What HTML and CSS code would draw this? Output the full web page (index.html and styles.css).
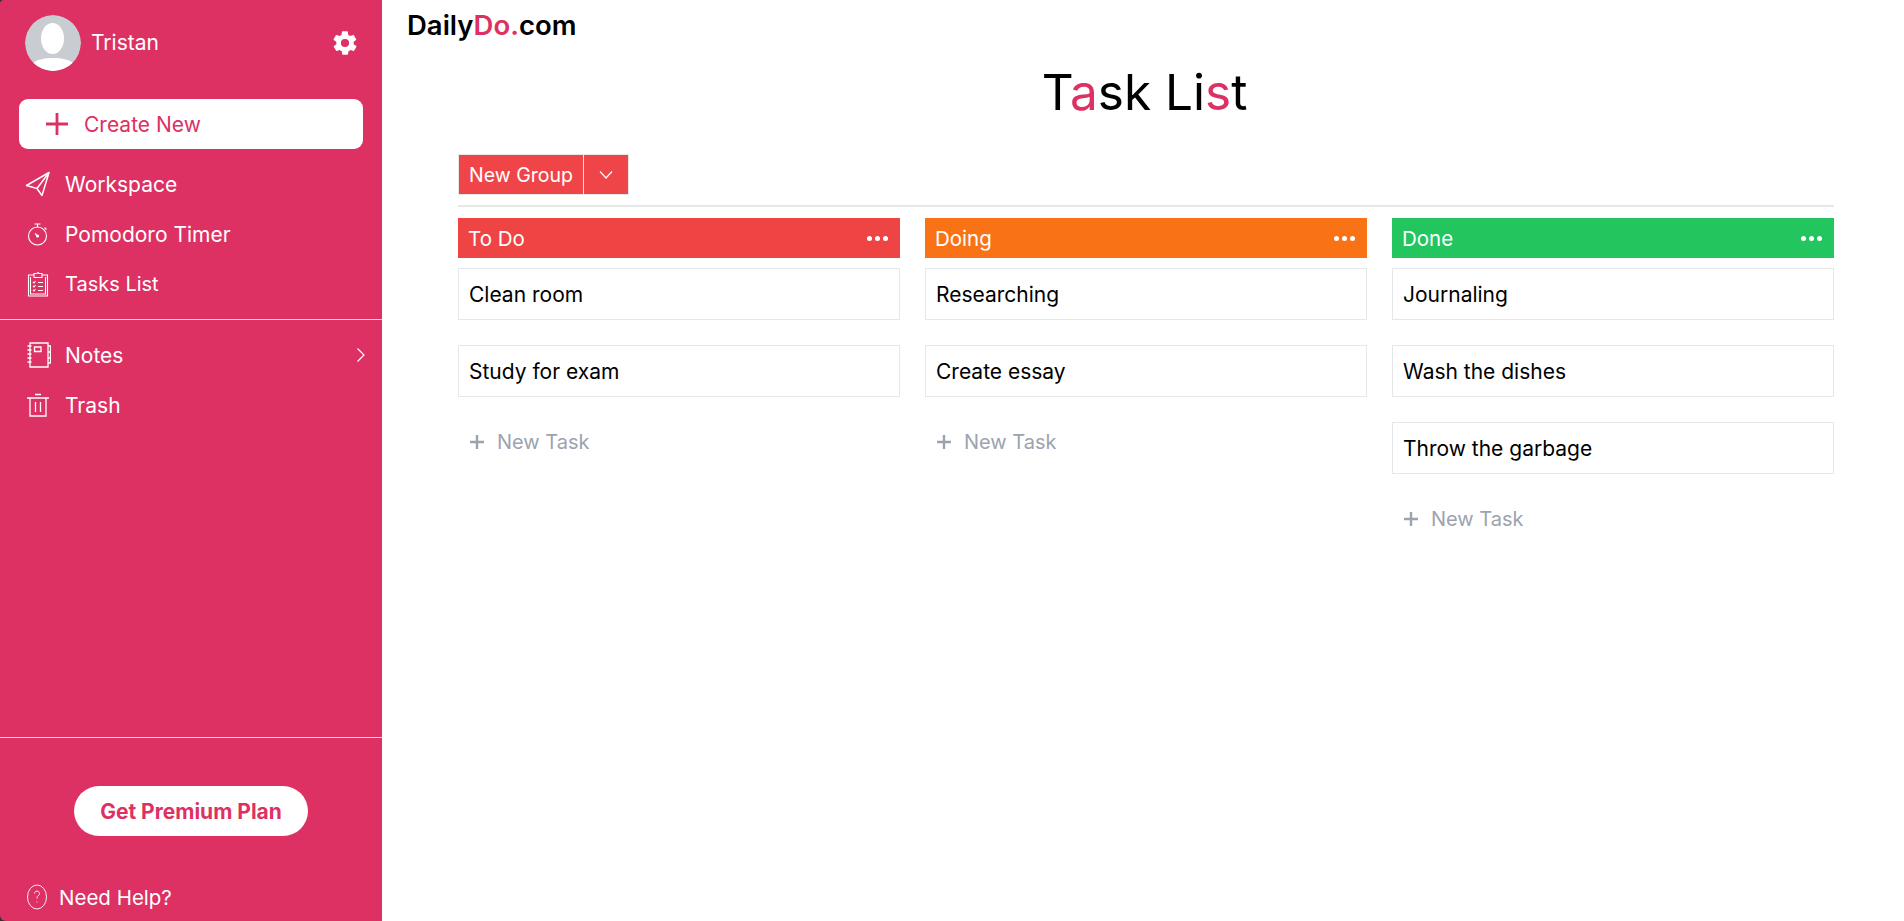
FILE: index.html
```html
<!DOCTYPE html>
<html lang="en">

<head>
    <meta charset="UTF-8">
    <title>DailyDo - Task List</title>
    <link rel="stylesheet" href="styles.css">
</head>

<body>
    <aside class="sidebar">
        <div class="profile">
            <div class="avatar">
                <svg viewBox="0 0 56 56" width="56" height="56">
                    <circle cx="28" cy="28" r="28" fill="#c9ccd1"/>
                    <ellipse cx="27.500" cy="23.500" rx="11.500" ry="15.500" fill="#fff"/>
                    <path d="M8 48c3-3 11-5 20-5s17 2 20 5a28 28 0 0 1-40 0z" fill="#fff"/>
                </svg>
            </div>
            <span class="profile-name">Tristan</span>
            <svg class="gear" viewBox="0 0 24 24" width="28" height="28">
                <path fill="#fff" d="M19.400 13a7.600 7.600 0 0 0 0-2l2.100-1.600a.5.5 0 0 0 .1-.6l-2-3.500a.5.5 0 0 0-.6-.2l-2.500 1a7.500 7.500 0 0 0-1.700-1l-.4-2.700a.5.5 0 0 0-.5-.4h-4a.5.5 0 0 0-.5.4l-.4 2.700a7.500 7.500 0 0 0-1.700 1l-2.500-1a.5.5 0 0 0-.6.2l-2 3.500a.5.5 0 0 0 .1.6L4.600 11a7.600 7.600 0 0 0 0 2l-2.100 1.600a.5.5 0 0 0-.1.6l2 3.500a.5.5 0 0 0 .6.2l2.500-1a7.500 7.500 0 0 0 1.700 1l.4 2.700a.5.5 0 0 0 .5.4h4a.5.5 0 0 0 .5-.4l.4-2.700a7.500 7.500 0 0 0 1.700-1l2.500 1a.5.5 0 0 0 .6-.2l2-3.500a.5.5 0 0 0-.1-.6zM12 15.500a3.500 3.500 0 1 1 0-7 3.500 3.500 0 0 1 0 7z"/>
            </svg>
        </div>

        <a class="create-btn" href="#">
            <svg viewBox="0 0 22 22" width="22" height="22"><path d="M11 0v22M0 11h22" stroke="#dd3163" stroke-width="2.800"/></svg>
            <span>Create New</span>
        </a>

        <nav class="nav-group nav-top">
            <a class="nav-item" href="#">
                <svg viewBox="0 0 26 26" width="26" height="26" fill="none" stroke="#fff" stroke-width="1.500" stroke-linejoin="round"><path d="M24 1.500L1.500 14.500 12 17.500l5 7zM12 17.500L24 1.500"/></svg>
                <span>Workspace</span>
            </a>
            <a class="nav-item" href="#">
                <svg viewBox="0 0 26 26" width="26" height="26" fill="none" stroke="#fff" stroke-width="1.100"><circle cx="12.500" cy="15" r="9"/><path d="M9.500 3h6M12.500 3v3M19.500 6.500l2 2"/><path d="M10 12.500l2.500 2.500"/><circle cx="12.500" cy="15" r="1" fill="#fff"/></svg>
                <span>Pomodoro Timer</span>
            </a>
            <a class="nav-item" href="#">
                <svg viewBox="0 0 26 26" width="26" height="26" fill="none" stroke="#fff" stroke-width="1.100"><path d="M9 4H3.500v21h19V4H17"/><path d="M5.500 6v17h15V6"/><path d="M9 2.500h3l1-1 1 1h3v4H9z"/><path d="M8 11l1 1 1.500-2M8 15l1 1 1.500-2M8 19l1 1 1.500-2M13 11.500h5M13 15.500h5M13 19.500h5"/></svg>
                <span class="tight">Tasks List</span>
            </a>
        </nav>

        <nav class="nav-group nav-bottom">
            <a class="nav-item" href="#">
                <svg viewBox="0 0 26 26" width="26" height="26" fill="none" stroke="#fff" stroke-width="1.300"><path d="M5 1h18v24H5z"/><path d="M9.500 5h6.500v4.500H9.500z"/><path d="M23 4h2.500v6H23M23 10h2.500v6H23M23 16h2.500v5H23"/><path d="M2.500 4h4M2.500 8h4M2.500 12h4M2.500 16h4M2.500 20h4"/></svg>
                <span>Notes</span>
                <svg class="chevron" viewBox="0 0 10 16" width="10" height="16" fill="none" stroke="#fff" stroke-width="1.200"><path d="M1.500 1.500L8 8l-6.500 6.500"/></svg>
            </a>
            <a class="nav-item" href="#">
                <svg viewBox="0 0 26 26" width="26" height="26" fill="none" stroke="#fff" stroke-width="1.300"><path d="M2 6h22M10 2.500h6M5 6v18h16V6M10.500 10v10M15.500 10v10"/></svg>
                <span>Trash</span>
            </a>
        </nav>

        <div class="premium">
            <a class="premium-btn" href="#">Get Premium Plan</a>
        </div>

        <a class="help" href="#">
            <svg viewBox="0 0 24 26" width="24" height="26" fill="none" stroke="#fff" stroke-width=".9"><ellipse cx="12" cy="13" rx="9.500" ry="12"/><path d="M9.500 9.500a2.500 2.500 0 1 1 3.800 2.200c-.9.500-1.300 1-1.300 2.800M12 17.500v1"/></svg>
            <span>Need Help?</span>
        </a>
    </aside>

    <main class="content">
        <div class="logo">Daily<span class="accent">Do.</span>com</div>
        <h1 class="page-title">T<span class="accent">a</span>sk Li<span class="accent">s</span>t</h1>

        <section class="board">
            <div class="toolbar">
                <div class="group-btn">
                    <span class="group-label">New Group</span>
                    <span class="group-arrow">
                        <svg viewBox="0 0 16 10" width="16" height="10" fill="none" stroke="#fff" stroke-width="1.200"><path d="M2 1.500l6 6.500 6-6.500"/></svg>
                    </span>
                </div>
            </div>

            <div class="columns">
                <div class="column">
                    <div class="column-head head-red"><span>To Do</span><span class="dots"><i></i><i></i><i></i></span></div>
                    <div class="task">Clean room</div>
                    <div class="task">Study for exam</div>
                    <a class="new-task" href="#"><svg viewBox="0 0 16 16" width="16" height="16"><path d="M8 1v14M1 8h14" stroke="#9ca3af" stroke-width="2.400"/></svg><span>New Task</span></a>
                </div>
                <div class="column">
                    <div class="column-head head-orange"><span>Doing</span><span class="dots"><i></i><i></i><i></i></span></div>
                    <div class="task">Researching</div>
                    <div class="task">Create essay</div>
                    <a class="new-task" href="#"><svg viewBox="0 0 16 16" width="16" height="16"><path d="M8 1v14M1 8h14" stroke="#9ca3af" stroke-width="2.400"/></svg><span>New Task</span></a>
                </div>
                <div class="column">
                    <div class="column-head head-green"><span>Done</span><span class="dots"><i></i><i></i><i></i></span></div>
                    <div class="task">Journaling</div>
                    <div class="task">Wash the dishes</div>
                    <div class="task">Throw the garbage</div>
                    <a class="new-task" href="#"><svg viewBox="0 0 16 16" width="16" height="16"><path d="M8 1v14M1 8h14" stroke="#9ca3af" stroke-width="2.400"/></svg><span>New Task</span></a>
                </div>
            </div>
        </section>
    </main>
</body>

</html>
```

FILE: styles.css
```css
* {
    box-sizing: border-box;
}

html, body {
    height: 100%;
    margin: 0;
}

body {
    display: flex;
    font-family: "Inter", "Noto Sans", sans-serif;
    background: #333333;
    color: #000000;
    overflow: hidden;
}

a {
    color: inherit;
    text-decoration: none;
}

.accent {
    color: #dd3163;
}

/* sidebar */
.sidebar {
    width: 382px;
    height: 921px;
    flex-shrink: 0;
    display: flex;
    flex-direction: column;
    background: #dd3163;
    border-top-left-radius: 4px;
    border-bottom-left-radius: 6px;
    color: #ffffff;
    font-size: 21px;
}

.profile {
    display: flex;
    align-items: center;
    height: 57px;
    margin-top: 14px;
    padding: 0 23px 0 25px;
}

.avatar {
    width: 56px;
    height: 56px;
    border-radius: 50%;
    overflow: hidden;
    flex-shrink: 0;
}

.profile-name {
    margin-left: 10px;
    flex: 1;
}

.create-btn {
    display: flex;
    align-items: center;
    gap: 16px;
    height: 50px;
    margin: 28px 19px 0;
    padding-left: 27px;
    background: #ffffff;
    border-radius: 9px;
    color: #dd3163;
}

.nav-group {
    display: flex;
    flex-direction: column;
    gap: 10px;
}

.nav-top {
    padding: 15px 0;
    border-bottom: 1px solid #f6d5df;
}

.nav-bottom {
    flex: 1;
    padding: 15px 0 0;
    border-bottom: 1px solid #f6d5df;
}

.nav-item {
    display: flex;
    align-items: center;
    gap: 14px;
    height: 40px;
    padding: 0 16px 0 25px;
}

.tight {
    font-size: 20px;
}

.chevron {
    margin-left: auto;
}

.premium {
    display: flex;
    justify-content: center;
    padding-top: 48px;
}

.premium-btn {
    display: flex;
    align-items: center;
    justify-content: center;
    width: 234px;
    height: 50px;
    border-radius: 25px;
    background: #ffffff;
    color: #dd3163;
    font-weight: 700;
}

.help {
    display: flex;
    align-items: center;
    gap: 10px;
    height: 30px;
    margin-top: 46px;
    margin-bottom: 9px;
    padding-left: 25px;
    font-size: 20.500px;
}

/* main */
.content {
    flex: 1;
    min-width: 0;
    background: #ffffff;
}

.logo {
    margin: 8px 0 0 25px;
    font-size: 27.500px;
    font-weight: 600;
    line-height: 34px;
}

.page-title {
    margin: 14px 0 0;
    padding-left: 3px;
    text-align: center;
    font-size: 49.500px;
    font-weight: 400;
    line-height: 72px;
}

.board {
    margin: 26px 70px 0 76px;
    font-size: 20px;
}

.toolbar {
    padding-bottom: 10px;
    border-bottom: 2px solid #e5e7eb;
}

.group-btn {
    display: inline-flex;
    height: 41px;
    vertical-align: top;
    background: #f04548;
    border: 1px solid #e5e7eb;
    color: #ffffff;
    font-size: 19.500px;
}

.group-label {
    display: flex;
    align-items: center;
    padding: 0 10px 0 10px;
    border-right: 1px solid #e5e7eb;
}

.group-arrow {
    display: flex;
    align-items: center;
    justify-content: center;
    width: 44px;
}

.columns {
    display: grid;
    grid-template-columns: repeat(3, 1fr);
    gap: 25px;
    padding-top: 11px;
}

.column-head {
    display: flex;
    align-items: center;
    justify-content: space-between;
    height: 40px;
    padding: 0 12px 0 10px;
    color: #ffffff;
    font-size: 20.500px;
}

.head-red {
    background: #ef4444;
}

.head-orange {
    background: #f97316;
}

.head-green {
    background: #22c55e;
}

.dots {
    display: flex;
    gap: 3px;
}

.dots i {
    width: 5px;
    height: 5px;
    border-radius: 50%;
    background: #ffffff;
}

.task {
    display: flex;
    align-items: center;
    height: 52px;
    margin-top: 10px;
    margin-bottom: 25px;
    padding: 0 10px;
    border: 1px solid #e5e7eb;
    font-size: 21px;
}

.task + .task {
    margin-top: 0;
}

.new-task {
    display: flex;
    align-items: center;
    gap: 12px;
    padding-left: 11px;
    height: 40px;
    color: #9ca3af;
}
```
